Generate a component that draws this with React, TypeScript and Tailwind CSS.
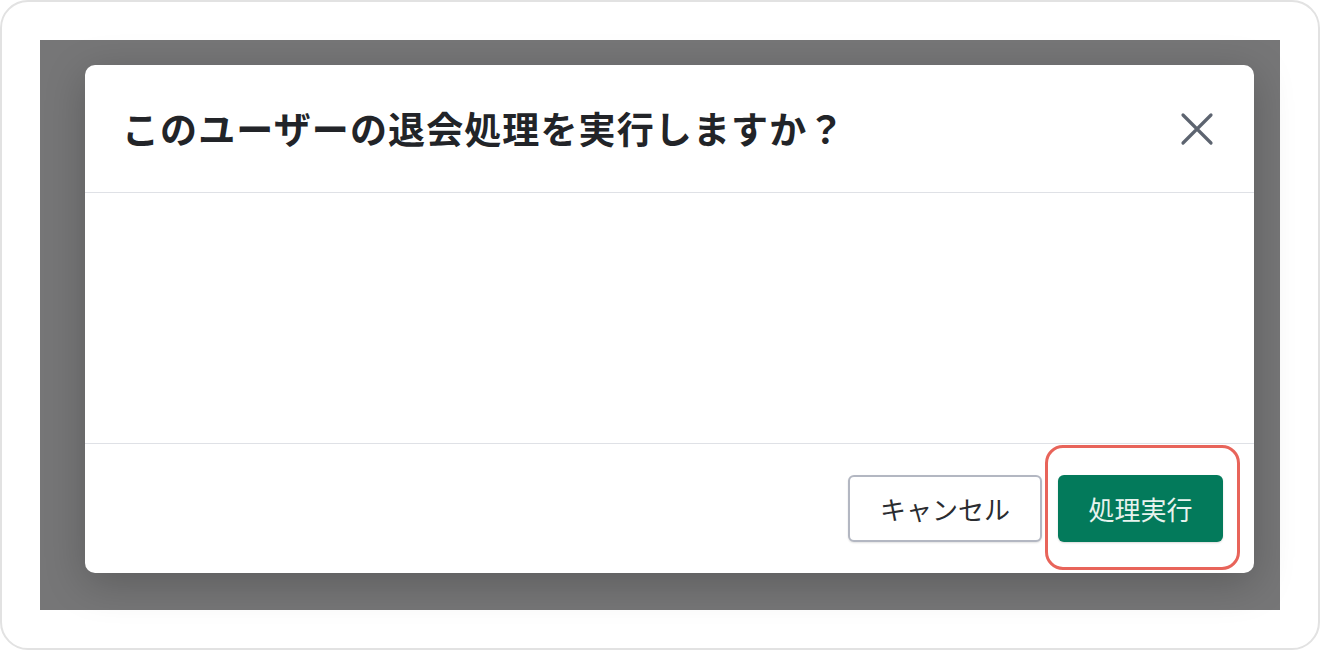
import React from "react";

export default function App() {
  return (
    <div
      className="w-[1320px] h-[650px] bg-white flex"
      style={{ fontFamily: '"Noto Sans CJK JP", "Noto Sans", sans-serif' }}
    >
      <div className="flex-1 m-0 rounded-[28px] border-2 border-[#e2e2e2] p-[38px] flex">
        <div className="flex-1 bg-[#767677] pt-[25px] pl-[45px] pr-[26px] pb-[37px] flex">
          <div className="flex-1 bg-white rounded-[10px] shadow-[0_10px_40px_rgba(0,0,0,0.22)] flex flex-col">
            <div className="h-[128px] flex items-center justify-between pl-[37px] pr-[40px] border-b border-[#dfe1e6]">
              <h1 className="text-[37px] font-bold text-[#222428] tracking-[0.03em] leading-none">
                このユーザーの退会処理を実行しますか？
              </h1>
              <svg width="34" height="34" viewBox="0 0 34 34" fill="none" stroke="#5d6470" strokeWidth="3.2" strokeLinecap="round">
                <path d="M3 3 L31 31 M31 3 L3 31" />
              </svg>
            </div>
            <div className="h-[251px] border-b border-[#dfe1e6]"></div>
            <div className="flex-1 flex items-center justify-end gap-[16px] pr-[31px]">
              <button className="w-[194px] h-[67px] rounded-[6px] border-2 border-[#b3b7c2] bg-white text-[26px] text-[#2a2c30] shadow-[0_1px_2px_rgba(0,0,0,0.12)]">
                キャンセル
              </button>
              <div className="relative">
                <button className="w-[165px] h-[67px] rounded-[6px] bg-[#037a5b] text-[26px] text-[#e8f3ee] shadow-[0_1px_2px_rgba(0,0,0,0.15)]">
                  処理実行
                </button>
                <span className="absolute left-[-13px] right-[-17px] top-[-30px] bottom-[-28px] border-[3px] border-[#e8645a] rounded-[18px] pointer-events-none"></span>
              </div>
            </div>
          </div>
        </div>
      </div>
    </div>
  );
}
